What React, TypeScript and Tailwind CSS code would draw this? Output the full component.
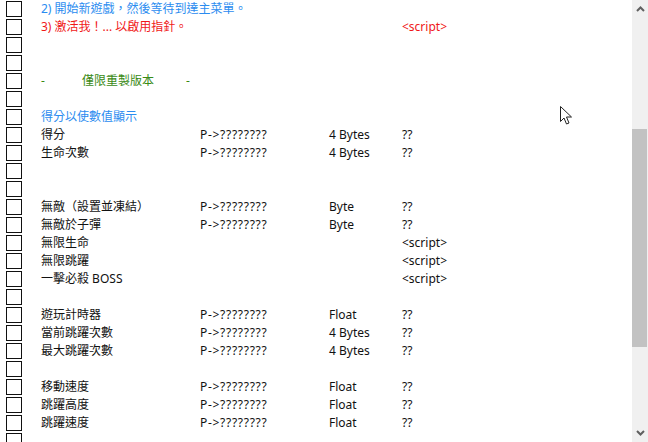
import React from "react";

type Row = {
  name?: string;
  color?: string;
  addr?: string;
  type?: string;
  value?: string;
  valueColor?: string;
  custom?: React.ReactNode;
};

const P = "P->????????";

const rows: Row[] = [
  { name: "2)  開始新遊戲，然後等待到達主菜單。", color: "text-[#2b8cf0]" },
  { name: "3)  激活我！... 以啟用指針。", color: "text-[#f01818]", value: "<script>", valueColor: "text-[#f01818]" },
  {},
  {},
  {
    custom: (
      <div className="flex text-[#3a8a14]">
        <span className="w-[41px]">-</span>
        <span className="w-[104px]">僅限重製版本</span>
        <span>-</span>
      </div>
    ),
  },
  {},
  { name: "得分以使數值顯示", color: "text-[#2b8cf0]" },
  { name: "得分", addr: P, type: "4 Bytes", value: "??" },
  { name: "生命次數", addr: P, type: "4 Bytes", value: "??" },
  {},
  {},
  { name: "無敵（設置並凍結）", addr: P, type: "Byte", value: "??" },
  { name: "無敵於子彈", addr: P, type: "Byte", value: "??" },
  { name: "無限生命", value: "<script>" },
  { name: "無限跳躍", value: "<script>" },
  { name: "一擊必殺 BOSS", value: "<script>" },
  {},
  { name: "遊玩計時器", addr: P, type: "Float", value: "??" },
  { name: "當前跳躍次數", addr: P, type: "4 Bytes", value: "??" },
  { name: "最大跳躍次數", addr: P, type: "4 Bytes", value: "??" },
  {},
  { name: "移動速度", addr: P, type: "Float", value: "??" },
  { name: "跳躍高度", addr: P, type: "Float", value: "??" },
  { name: "跳躍速度", addr: P, type: "Float", value: "??" },
  {},
];

export default function App() {
  return (
    <div
      className="relative flex w-[648px] h-[442px] overflow-hidden bg-white text-[12px] text-[#111]"
      style={{ fontFamily: '"Noto Sans", "Noto Sans CJK TC", sans-serif' }}
    >
      <div className="flex-1 flex flex-col">
        {rows.map((r, i) => (
          <div key={i} className="flex items-center h-[18px] shrink-0 leading-[18px]">
            <div className="ml-[6px] w-[16px] h-[16px] border-[1.5px] border-[#111] shrink-0" />
            <div className="ml-[19px] flex-1 flex whitespace-nowrap">
              {r.custom ? (
                r.custom
              ) : (
                <>
                  <span className={`w-[159px] ${r.color ?? ""}`}>{r.name}</span>
                  <span className="w-[129px] tracking-[0.7px]">{r.addr}</span>
                  <span className="w-[73px]">{r.type}</span>
                  <span className={r.valueColor ?? ""}>{r.value}</span>
                </>
              )}
            </div>
          </div>
        ))}
      </div>
      <div className="w-[16px] h-full bg-[#f0f0f0] flex flex-col items-center">
        <div className="h-[18px] flex items-center justify-center">
          <svg width="9" height="6" viewBox="0 0 9 6">
            <path d="M1 5 L4.5 1.5 L8 5" fill="none" stroke="#606060" strokeWidth="2" />
          </svg>
        </div>
        <div className="mt-[111px] w-[15px] h-[218px] bg-[#c2c2c2] self-start" />
        <div className="flex-1" />
        <div className="h-[18px] flex items-center justify-center">
          <svg width="9" height="6" viewBox="0 0 9 6">
            <path d="M1 1 L4.5 4.5 L8 1" fill="none" stroke="#606060" strokeWidth="2" />
          </svg>
        </div>
      </div>
      <svg className="absolute left-[560px] top-[106px]" width="14" height="20" viewBox="0 0 14 20">
        <path
          d="M0.5 0.5 L0.5 15.5 L4 12 L6.5 18 L9 17 L6.5 11 L11.5 11 Z"
          fill="white"
          stroke="#222"
          strokeWidth="1"
          strokeLinejoin="round"
        />
      </svg>
    </div>
  );
}
